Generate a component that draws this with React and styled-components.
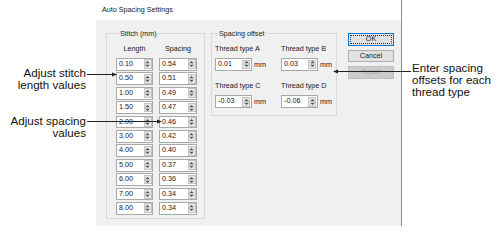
import styled, { createGlobalStyle } from "styled-components";

const GlobalStyle = createGlobalStyle`
  html, body { margin: 0; padding: 0; background: #fff; }
  body { font-family: "Liberation Sans", Arial, sans-serif; }
`;

const Page = styled.div`
  position: relative;
  display: flex;
  width: 501px;
  height: 241px;
  overflow: hidden;
  background: #fff;
`;

const NotesLeft = styled.div`
  width: 96px;
  box-sizing: border-box;
  padding: 67px 10px 0 0;
  text-align: right;
`;

const NotesRight = styled.div`
  flex: 1;
  padding: 62px 0 0 10px;
`;

const Note = styled.div`
  font-size: 11.6px;
  line-height: 12px;
  color: #111;
  margin-top: ${(p) => p.$gap || 0}px;
`;

const Dialog = styled.div`
  width: 306px;
  height: 226px;
  display: flex;
  flex-direction: column;
  box-sizing: border-box;
  border-right: 1px solid #8c8c8c;
  font-size: 7.2px;
  color: #1a1a1a;
`;

const TitleBar = styled.div`
  height: 20px;
  line-height: 20px;
  padding-left: 6px;
  background: #fff;
`;

const Body = styled.div`
  flex: 1;
  display: flex;
  align-items: flex-start;
  background: #f0f0f0;
  padding: 8.5px 0 0 10px;
`;

const Group = styled.fieldset`
  margin: 0 ${(p) => p.$mr}px 0 0;
  width: ${(p) => p.$w}px;
  box-sizing: border-box;
  min-width: 0;
  border: 1px solid #d9d9d9;
  padding: 0 0 ${(p) => p.$pb}px ${(p) => p.$pl}px;

  legend {
    margin-left: 3px;
    padding: 0 1px;
    line-height: 9px;
  }
`;

const StitchGrid = styled.div`
  display: grid;
  grid-template-columns: 37px 38px;
  column-gap: 6px;
  row-gap: 1.6px;
  padding-top: 6px;
`;

const HeadCell = styled.div`
  text-align: center;
  line-height: 9px;
  margin-bottom: 3.9px;
`;

const OffsetGrid = styled.div`
  display: grid;
  grid-template-columns: 51px 51px;
  column-gap: 15px;
  row-gap: 10px;
  padding-top: 6px;
`;

const OffsetCell = styled.div`
  display: flex;
  flex-direction: column;
  gap: 5.5px;
  line-height: 9px;
`;

const FieldRow = styled.div`
  display: flex;
  align-items: center;
`;

const SpinBox = styled.div`
  display: flex;
  width: ${(p) => p.$w}px;
  height: 12.8px;
  box-sizing: border-box;
  border: 1px solid #a9a9a9;
  background: #fff;
`;

const Value = styled.div`
  flex: 1;
  padding-left: 2px;
  line-height: 10.8px;
`;

const Spinner = styled.div`
  width: 8px;
  margin: 0.5px;
  display: flex;
  align-items: center;
  justify-content: center;
  background: #e6e6e6;
  border: 1px solid #c4c4c4;
  box-sizing: border-box;
`;

const Unit = styled.span`
  margin-left: 2.5px;
`;

const Buttons = styled.div`
  display: flex;
  flex-direction: column;
  gap: 3.8px;
  margin-top: 4.5px;
`;

const Button = styled.div`
  width: 46px;
  height: 12.8px;
  box-sizing: border-box;
  line-height: 10.8px;
  text-align: center;
  background: ${(p) => (p.$disabled ? "#cccccc" : "#e1e1e1")};
  color: ${(p) => (p.$disabled ? "#a3a3a3" : "#1a1a1a")};
  border: 1px solid ${(p) => (p.$default ? "#0078d7" : p.$disabled ? "#bfbfbf" : "#adadad")};
  outline: ${(p) => (p.$default ? "1px dotted #333" : "none")};
  outline-offset: -3px;
`;

const Callouts = styled.svg`
  position: absolute;
  left: 0;
  top: 0;
  pointer-events: none;
`;

const lengths = ["0.10", "0.50", "1.00", "1.50", "2.00", "3.00", "4.00", "5.00", "6.00", "7.00", "8.00"];
const spacings = ["0.54", "0.51", "0.49", "0.47", "0.46", "0.42", "0.40", "0.37", "0.36", "0.34", "0.34"];
const offsets = [
  ["Thread type A", "0.01"],
  ["Thread type B", "0.03"],
  ["Thread type C", "-0.03"],
  ["Thread type D", "-0.06"],
];

function SpinIcon() {
  return (
    <svg width="5" height="8" viewBox="0 0 5 8">
      <path d="M0.5 3 L2.5 1 L4.5 3 Z" fill="#555" />
      <path d="M0 4 H5" stroke="#777" strokeWidth="0.6" />
      <path d="M0.5 5 L2.5 7 L4.5 5 Z" fill="#555" />
    </svg>
  );
}

function Spin({ value, w }) {
  return (
    <SpinBox $w={w}>
      <Value>{value}</Value>
      <Spinner>
        <SpinIcon />
      </Spinner>
    </SpinBox>
  );
}

export default function App() {
  return (
    <Page>
      <GlobalStyle />
      <NotesLeft>
        <Note>Adjust stitch<br />length values</Note>
        <Note $gap={24}>Adjust spacing<br />values</Note>
      </NotesLeft>

      <Dialog>
        <TitleBar>Auto Spacing Settings</TitleBar>
        <Body>
          <Group $w={99} $mr={6} $pl={9} $pb={3.5}>
            <legend>Stitch (mm)</legend>
            <StitchGrid>
              <HeadCell>Length</HeadCell>
              <HeadCell>Spacing</HeadCell>
              {lengths.map((l, i) => [
                <Spin key={"l" + i} value={l} w={37} />,
                <Spin key={"s" + i} value={spacings[i]} w={38} />,
              ])}
            </StitchGrid>
          </Group>

          <Group $w={126} $mr={11} $pl={3} $pb={7}>
            <legend>Spacing offset</legend>
            <OffsetGrid>
              {offsets.map(([label, v]) => (
                <OffsetCell key={label}>
                  <span>{label}</span>
                  <FieldRow>
                    <Spin value={v} w={38} />
                    <Unit>mm</Unit>
                  </FieldRow>
                </OffsetCell>
              ))}
            </OffsetGrid>
          </Group>

          <Buttons>
            <Button $default>OK</Button>
            <Button>Cancel</Button>
            <Button $disabled>Reset</Button>
          </Buttons>
        </Body>
      </Dialog>

      <NotesRight>
        <Note>Enter spacing<br />offsets for each<br />thread type</Note>
      </NotesRight>

      <Callouts width="501" height="241">
        <g stroke="#222" strokeWidth="1">
          <path d="M87 74.5 H113" />
          <path d="M87 121.5 H158" />
          <path d="M411 71.5 H337" />
        </g>
        <g fill="#222">
          <polygon points="117,74.5 112,72.5 112,76.5" />
          <polygon points="162,121.5 157,119.5 157,123.5" />
          <polygon points="333,71.5 338,69.5 338,73.5" />
        </g>
      </Callouts>
    </Page>
  );
}
